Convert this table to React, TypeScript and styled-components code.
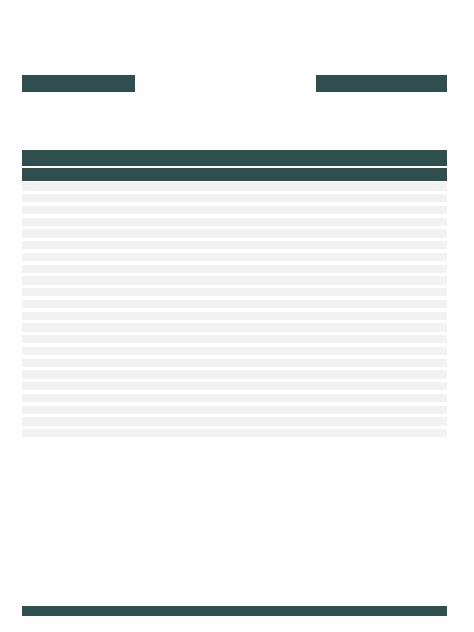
import React from 'react';
import styled, { createGlobalStyle } from 'styled-components';

const GlobalStyle = createGlobalStyle`
  html, body {
    margin: 0;
    padding: 0;
    background: #fff;
    font-family: 'Liberation Sans', Arial, sans-serif;
  }
`;

const Page = styled.div`
  box-sizing: border-box;
  display: flex;
  flex-direction: column;
  height: 632px;
  padding: 75px 27px 16px 22px;
`;

const Header = styled.div`
  display: flex;
  justify-content: space-between;
`;

const Block = styled.div<{ $width: number }>`
  background: #2f4f4f;
  height: 16.5px;
  width: ${(p) => p.$width}px;
`;

const Table = styled.div`
  display: flex;
  flex-direction: column;
  margin-top: 58px;
`;

const TitleBar = styled.div`
  background: #2f4f4f;
  height: 16.5px;
`;

const HeadRow = styled.div`
  background: #2f4f4f;
  height: 12.7px;
  margin-top: 2.2px;
`;

const Rows = styled.div`
  display: flex;
  flex-direction: column;
  gap: 3.5px;
  margin-top: 1.6px;
`;

const Row = styled.div`
  background: #f2f2f2;
  height: 8.25px;
`;

const Footer = styled.div`
  background: #2f4f4f;
  height: 10px;
  margin-top: auto;
`;

const rows = Array.from({ length: 22 }, (_, i) => i);

const App = (): JSX.Element => {
  return (
    <>
      <GlobalStyle />
      <Page>
        <Header>
          <Block $width={113} />
          <Block $width={131} />
        </Header>
        <Table>
          <TitleBar />
          <HeadRow />
          <Rows>
            {rows.map((i) => (
              <Row key={i} />
            ))}
          </Rows>
        </Table>
        <Footer />
      </Page>
    </>
  );
};

export default App;
